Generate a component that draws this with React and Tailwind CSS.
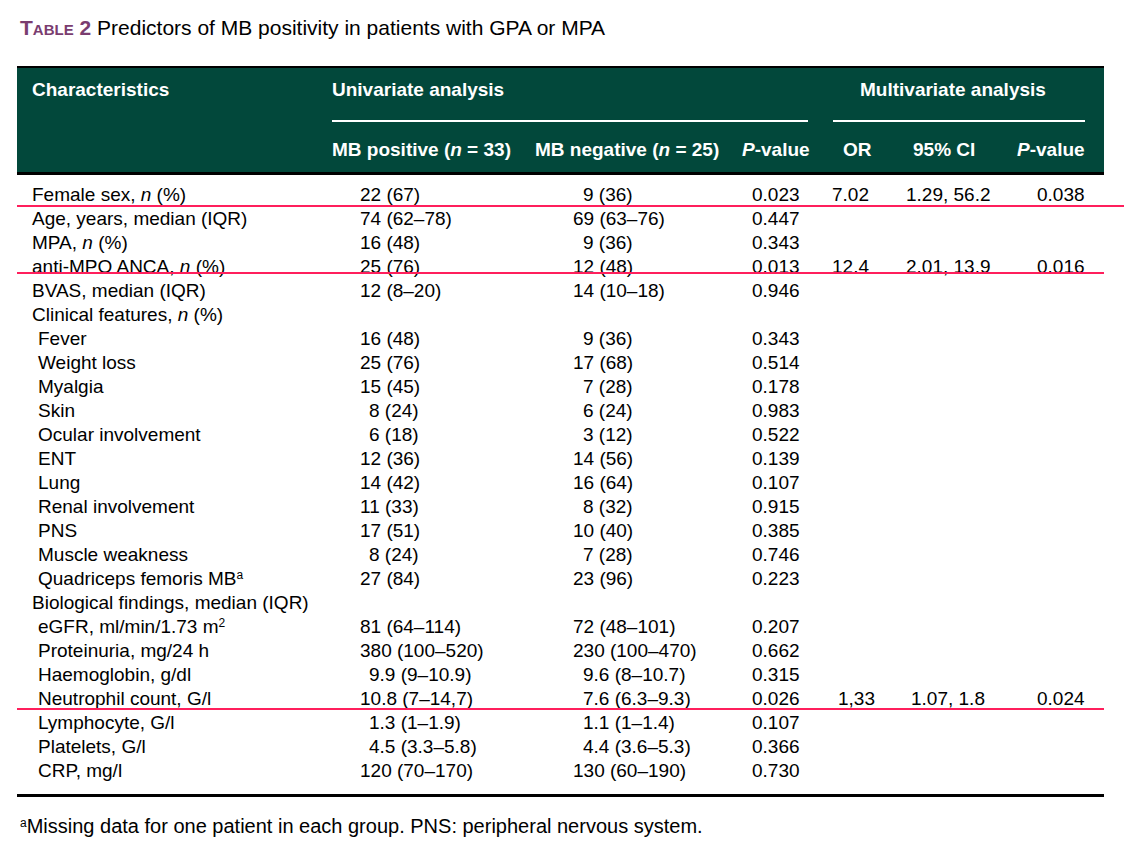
import React from 'react'

const rows = [
  { label: <>Female sex, <i>n</i> (%)</>, a: '22 (67)', b: '9 (36)', p: '0.023', or: '7.02', ci: '1.29, 56.2', p2: '0.038' },
  { label: 'Age, years, median (IQR)', a: '74 (62–78)', b: '69 (63–76)', p: '0.447' },
  { label: <>MPA, <i>n</i> (%)</>, a: '16 (48)', b: '9 (36)', p: '0.343' },
  { label: <>anti-MPO ANCA, <i>n</i> (%)</>, a: '25 (76)', b: '12 (48)', p: '0.013', or: '12.4', ci: '2.01, 13.9', p2: '0.016' },
  { label: 'BVAS, median (IQR)', a: '12 (8–20)', b: '14 (10–18)', p: '0.946' },
  { label: <>Clinical features, <i>n</i> (%)</> },
  { label: 'Fever', sub: true, a: '16 (48)', b: '9 (36)', p: '0.343' },
  { label: 'Weight loss', sub: true, a: '25 (76)', b: '17 (68)', p: '0.514' },
  { label: 'Myalgia', sub: true, a: '15 (45)', b: '7 (28)', p: '0.178' },
  { label: 'Skin', sub: true, a: '8 (24)', b: '6 (24)', p: '0.983' },
  { label: 'Ocular involvement', sub: true, a: '6 (18)', b: '3 (12)', p: '0.522' },
  { label: 'ENT', sub: true, a: '12 (36)', b: '14 (56)', p: '0.139' },
  { label: 'Lung', sub: true, a: '14 (42)', b: '16 (64)', p: '0.107' },
  { label: 'Renal involvement', sub: true, a: '11 (33)', b: '8 (32)', p: '0.915' },
  { label: 'PNS', sub: true, a: '17 (51)', b: '10 (40)', p: '0.385' },
  { label: 'Muscle weakness', sub: true, a: '8 (24)', b: '7 (28)', p: '0.746' },
  { label: <>Quadriceps femoris MB<sup className="text-[12px]">a</sup></>, sub: true, a: '27 (84)', b: '23 (96)', p: '0.223' },
  { label: 'Biological findings, median (IQR)' },
  { label: <>eGFR, ml/min/1.73 m<sup className="text-[12px]">2</sup></>, sub: true, a: '81 (64–114)', b: '72 (48–101)', p: '0.207' },
  { label: 'Proteinuria, mg/24 h', sub: true, a: '380 (100–520)', b: '230 (100–470)', p: '0.662' },
  { label: 'Haemoglobin, g/dl', sub: true, a: '9.9 (9–10.9)', b: '9.6 (8–10.7)', p: '0.315' },
  { label: 'Neutrophil count, G/l', sub: true, a: '10.8 (7–14,7)', b: '7.6 (6.3–9.3)', p: '0.026', or: '1,33', ci: '1.07, 1.8', p2: '0.024' },
  { label: 'Lymphocyte, G/l', sub: true, a: '1.3 (1–1.9)', b: '1.1 (1–1.4)', p: '0.107' },
  { label: 'Platelets, G/l', sub: true, a: '4.5 (3.3–5.8)', b: '4.4 (3.6–5.3)', p: '0.366' },
  { label: 'CRP, mg/l', sub: true, a: '120 (70–170)', b: '130 (60–190)', p: '0.730' },
]

// numbers whose integer part has one digit get pushed right a digit's width
const oneDigit = (s) => s && /^\d[^\d]/.test(s)

const cols = 'grid grid-cols-[310px_203px_205px_90px_70px_110px_99px]'

function Row({ r }) {
  return (
    <div className={`${cols} h-6 items-center whitespace-nowrap`}>
      <div className={r.sub ? 'pl-[21px]' : 'pl-[15px]'}>{r.label}</div>
      <div className={oneDigit(r.a) ? 'pl-[42px]' : 'pl-[33px]'}>{r.a}</div>
      <div className={oneDigit(r.b) ? 'pl-[53px]' : 'pl-[43px]'}>{r.b}</div>
      <div className="pl-[17px]">{r.p}</div>
      <div className={r.or === '1,33' ? 'pl-[13px]' : 'pl-[7px]'}>{r.or}</div>
      <div className={r.ci === '1.07, 1.8' ? 'pl-[16px]' : 'pl-[11px]'}>{r.ci}</div>
      <div className="pl-[32px]">{r.p2}</div>
    </div>
  )
}

export default function App() {
  return (
    <div className="relative w-[1134px] h-[846px] bg-white text-black font-['Liberation_Sans',Arial,sans-serif] text-[19px] leading-6">
      <div className="pl-5 pt-[16px] h-[66px] text-[21px]">
        <span className="font-bold text-[#7a3d70]">
          T<span className="text-[15px]">ABLE</span> 2
        </span>{' '}
        Predictors of MB positivity in patients with GPA or MPA
      </div>

      <div className="ml-[17px] w-[1087px]">
        <div className="bg-[#02483b] border-t-2 border-b-[3px] border-black text-white font-bold whitespace-nowrap text-[19px]">
          <div className={`${cols} h-[43px] items-center`}>
            <div className="pl-[15px]">Characteristics</div>
            <div className="col-span-3 pl-[5px]">Univariate analysis</div>
            <div className="col-span-3 pl-[35px]">Multivariate analysis</div>
          </div>
          <div className={`${cols} mt-[9px]`}>
            <div />
            <div className="col-span-3 ml-[5px] mr-[17px] h-[2px] bg-white" />
            <div className="col-span-3 ml-[8px] mr-[19px] h-[2px] bg-white" />
          </div>
          <div className={`${cols} h-[50px] pt-[6px] items-center`}>
            <div />
            <div className="pl-[5px]">MB positive (<i>n</i> = 33)</div>
            <div className="pl-[5px]">MB negative (<i>n</i> = 25)</div>
            <div className="pl-[7px]"><i>P</i>-value</div>
            <div className="pl-[18px]">OR</div>
            <div className="pl-[18px]">95% CI</div>
            <div className="pl-[12px]"><i>P</i>-value</div>
          </div>
        </div>

        <div className="pt-[8px] pb-[11px] border-b-[3px] border-black">
          {rows.map((r, i) => <Row key={i} r={r} />)}
        </div>
      </div>

      <div className="pl-5 pt-[17px] text-[20px]">
        <sup className="text-[12px]">a</sup>Missing data for one patient in each group. PNS: peripheral nervous system.
      </div>

      {/* highlight strokes drawn over the table */}
      <div className="absolute left-[17px] top-[205px] w-[1107px] h-[2px] bg-[#ff1f5c]" />
      <div className="absolute left-[17px] top-[272px] w-[1087px] h-[2px] bg-[#ff1f5c]" />
      <div className="absolute left-[17px] top-[708px] w-[1087px] h-[2px] bg-[#ff1f5c]" />
    </div>
  )
}
